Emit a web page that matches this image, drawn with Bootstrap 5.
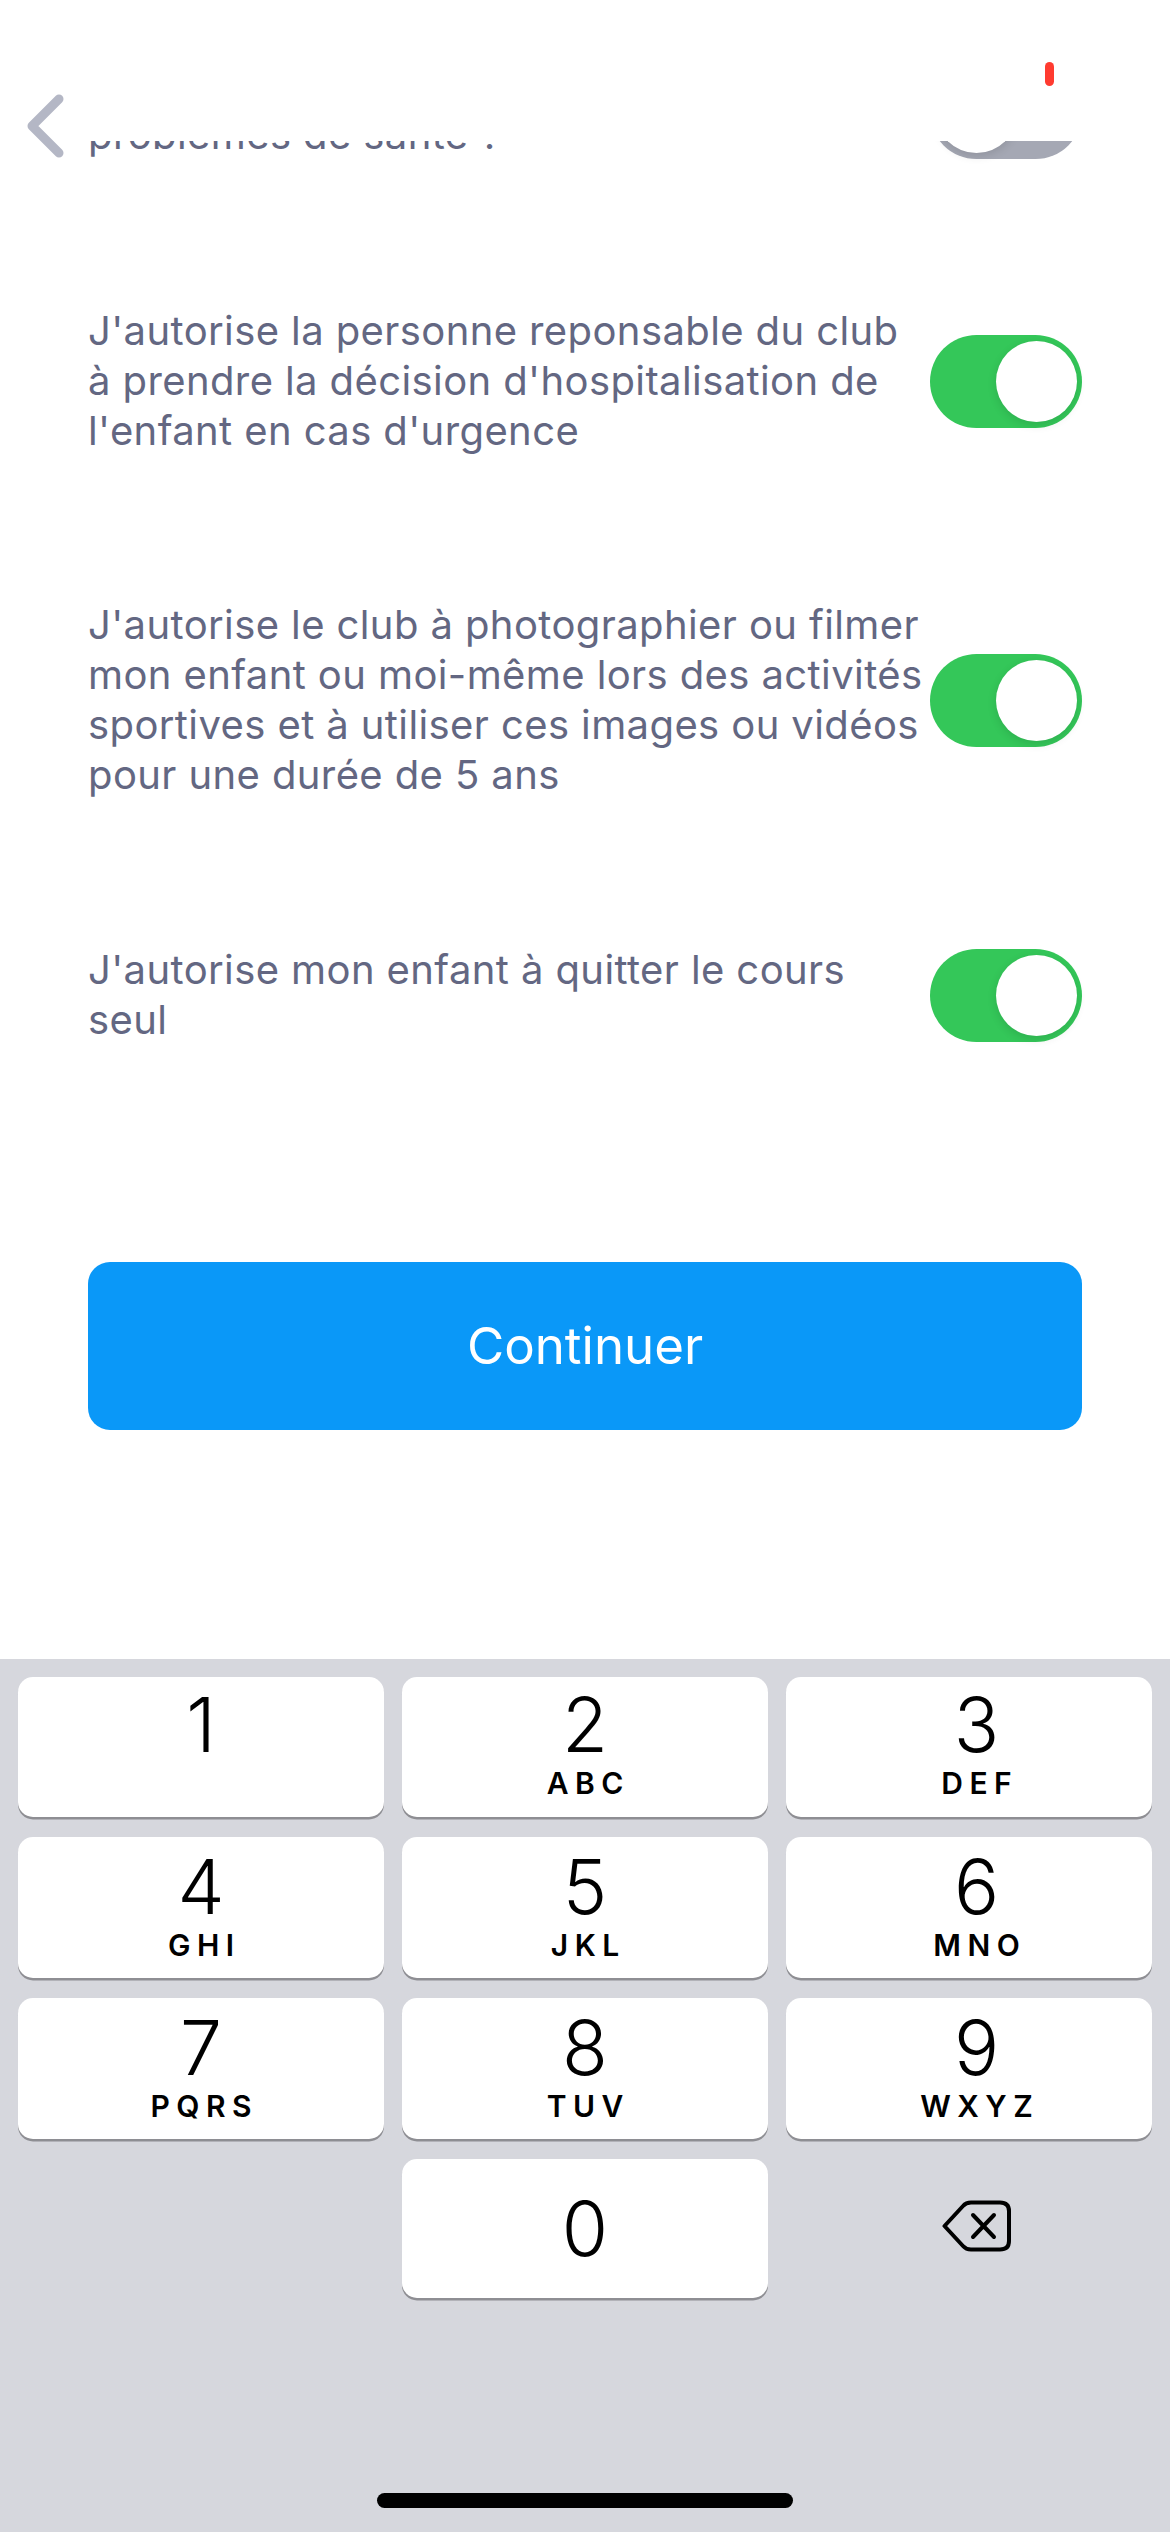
<!DOCTYPE html>
<html lang="fr">
<head>
  <meta charset="UTF-8" />
  <title>Autorisations</title>
  <link
    rel="stylesheet"
    href="https://cdn.jsdelivr.net/npm/bootstrap@5.3.3/dist/css/bootstrap.min.css"
  />
  <style>
    body {
      font-family: Inter, "Liberation Sans", sans-serif;
      background-color: #fff;
    }

    /* Top bar: the scrolled content is cut at its lower edge */
    .top-bar {
      height: 141px;
      flex-shrink: 0;
    }
    .back-arrow {
      position: absolute;
      left: 22px;
      top: 90px;
      z-index: 2;
    }
    .red-tick {
      position: absolute;
      left: 1045px;
      top: 62px;
      width: 9px;
      height: 24px;
      border-radius: 5px;
      background-color: #ff3b30;
    }

    .scroll-zone {
      padding: 0 88px;
    }
    .option-row {
      margin-bottom: 144px;
    }
    .option-row.wide-gap {
      margin-bottom: 145px;
    }
    .option-row.cut-row {
      margin-top: -79px;
      height: 100px;
    }
    .option-text {
      flex-grow: 1;
      color: #636782;
      font-size: 40px;
      line-height: 50px;
      letter-spacing: 0.4px;
      white-space: nowrap;
    }
    .cut-row .option-text {
      align-self: flex-end;
      margin-bottom: 2px;
    }

    /* iOS style switch */
    .toggle-track {
      width: 152px;
      height: 93px;
      flex-shrink: 0;
      padding: 6px;
      padding-right: 5px;
      background-color: #34c759;
    }
    .toggle-track.is-off {
      background-color: #a5a8b4;
    }
    .toggle-knob {
      width: 81px;
      height: 81px;
      background-color: #fff;
      box-shadow: 0 3px 10px rgba(0, 0, 0, 0.12);
    }

    .continue-btn {
      height: 168px;
      margin-top: 217px;
      border-radius: 22px;
      border: 0;
      background-color: #0a98f8;
      color: #fff;
      font-size: 51px;
    }

    /* Numeric keyboard */
    .num-pad {
      height: 873px;
      flex-shrink: 0;
      background-color: #d6d7dd;
      padding: 18px 18px 24px;
    }
    .key-grid {
      display: grid;
      grid-template-columns: repeat(3, 366px);
      grid-template-rows: 140px 141px 141px 139px;
      gap: 20px 18px;
    }
    .num-key {
      border-radius: 15px;
      background-color: #fff;
      box-shadow: 0 2.5px 0 #8e8e93;
      color: #000;
      padding-top: 12px;
    }
    .key-grid > .num-key:nth-child(-n+3) {
      padding-top: 10px;
    }
    /* the third column sits a little right of centre */
    .key-grid > :nth-child(3n) {
      padding-left: 15px;
    }
    .key-digit {
      font-size: 75px;
      font-weight: 300;
      line-height: 76px;
    }
    .key-letters {
      font-size: 30px;
      font-weight: 600;
      line-height: 40px;
      letter-spacing: 6.5px;
      margin-right: -6.5px;
    }
    .delete-icon {
      margin-bottom: 6px;
    }
    .home-bar {
      width: 416px;
      height: 15px;
      border-radius: 8px;
      background-color: #000;
    }
  </style>
</head>
<body>
  <div class="d-flex flex-column vh-100 overflow-hidden">

    <!-- Header -->
    <div class="top-bar bg-white position-relative">
      <svg class="back-arrow" width="42" height="70" viewBox="0 0 42 70" fill="none">
        <path d="M37 9 L10 36 L37 63" stroke="#b4b7c5" stroke-width="9" stroke-linecap="round" stroke-linejoin="round" />
      </svg>
      <div class="red-tick"></div>
    </div>

    <!-- Options, scrolled -->
    <div class="scroll-zone flex-grow-1 overflow-hidden">
      <div class="option-row cut-row d-flex align-items-center">
        <div class="option-text">problèmes de santé ?</div>
        <div class="toggle-track is-off rounded-pill d-flex justify-content-start">
          <div class="toggle-knob rounded-circle"></div>
        </div>
      </div>

      <div class="option-row d-flex align-items-center">
        <div class="option-text">J'autorise la personne reponsable du club<br />à prendre la décision d'hospitalisation de<br />l'enfant en cas d'urgence</div>
        <div class="toggle-track rounded-pill d-flex justify-content-end">
          <div class="toggle-knob rounded-circle"></div>
        </div>
      </div>

      <div class="option-row wide-gap d-flex align-items-center">
        <div class="option-text">J'autorise le club à photographier ou filmer<br />mon enfant ou moi-même lors des activités<br />sportives et à utiliser ces images ou vidéos<br />pour une durée de 5 ans</div>
        <div class="toggle-track rounded-pill d-flex justify-content-end">
          <div class="toggle-knob rounded-circle"></div>
        </div>
      </div>

      <div class="option-row d-flex align-items-center mb-0">
        <div class="option-text">J'autorise mon enfant à quitter le cours<br />seul</div>
        <div class="toggle-track rounded-pill d-flex justify-content-end">
          <div class="toggle-knob rounded-circle"></div>
        </div>
      </div>

      <button type="button" class="continue-btn btn w-100 d-flex align-items-center justify-content-center">Continuer</button>
    </div>

    <!-- Keyboard -->
    <div class="num-pad d-flex flex-column">
      <div class="key-grid">
        <div class="num-key d-flex flex-column align-items-center"><span class="key-digit">1</span></div>
        <div class="num-key d-flex flex-column align-items-center"><span class="key-digit">2</span><span class="key-letters">ABC</span></div>
        <div class="num-key d-flex flex-column align-items-center"><span class="key-digit">3</span><span class="key-letters">DEF</span></div>
        <div class="num-key d-flex flex-column align-items-center"><span class="key-digit">4</span><span class="key-letters">GHI</span></div>
        <div class="num-key d-flex flex-column align-items-center"><span class="key-digit">5</span><span class="key-letters">JKL</span></div>
        <div class="num-key d-flex flex-column align-items-center"><span class="key-digit">6</span><span class="key-letters">MNO</span></div>
        <div class="num-key d-flex flex-column align-items-center"><span class="key-digit">7</span><span class="key-letters">PQRS</span></div>
        <div class="num-key d-flex flex-column align-items-center"><span class="key-digit">8</span><span class="key-letters">TUV</span></div>
        <div class="num-key d-flex flex-column align-items-center"><span class="key-digit">9</span><span class="key-letters">WXYZ</span></div>
        <div></div>
        <div class="num-key d-flex align-items-center justify-content-center p-0"><span class="key-digit">0</span></div>
        <div class="d-flex align-items-center justify-content-center">
          <svg class="delete-icon" width="70" height="52" viewBox="0 0 70 52" fill="none" stroke="#000" stroke-width="4" stroke-linecap="round" stroke-linejoin="round">
            <path d="M2.5 26 L21 6 Q24 2.5 29 2.5 L58 2.5 Q67 2.5 67 11 L67 41 Q67 49.5 58 49.5 L29 49.5 Q24 49.5 21 46 Z" />
            <path d="M31 15 L52 37 M52 15 L31 37" />
          </svg>
        </div>
      </div>
      <div class="home-bar mt-auto mx-auto"></div>
    </div>

  </div>

  <script src="https://cdn.jsdelivr.net/npm/bootstrap@5.3.3/dist/js/bootstrap.bundle.min.js"></script>
</body>
</html>
